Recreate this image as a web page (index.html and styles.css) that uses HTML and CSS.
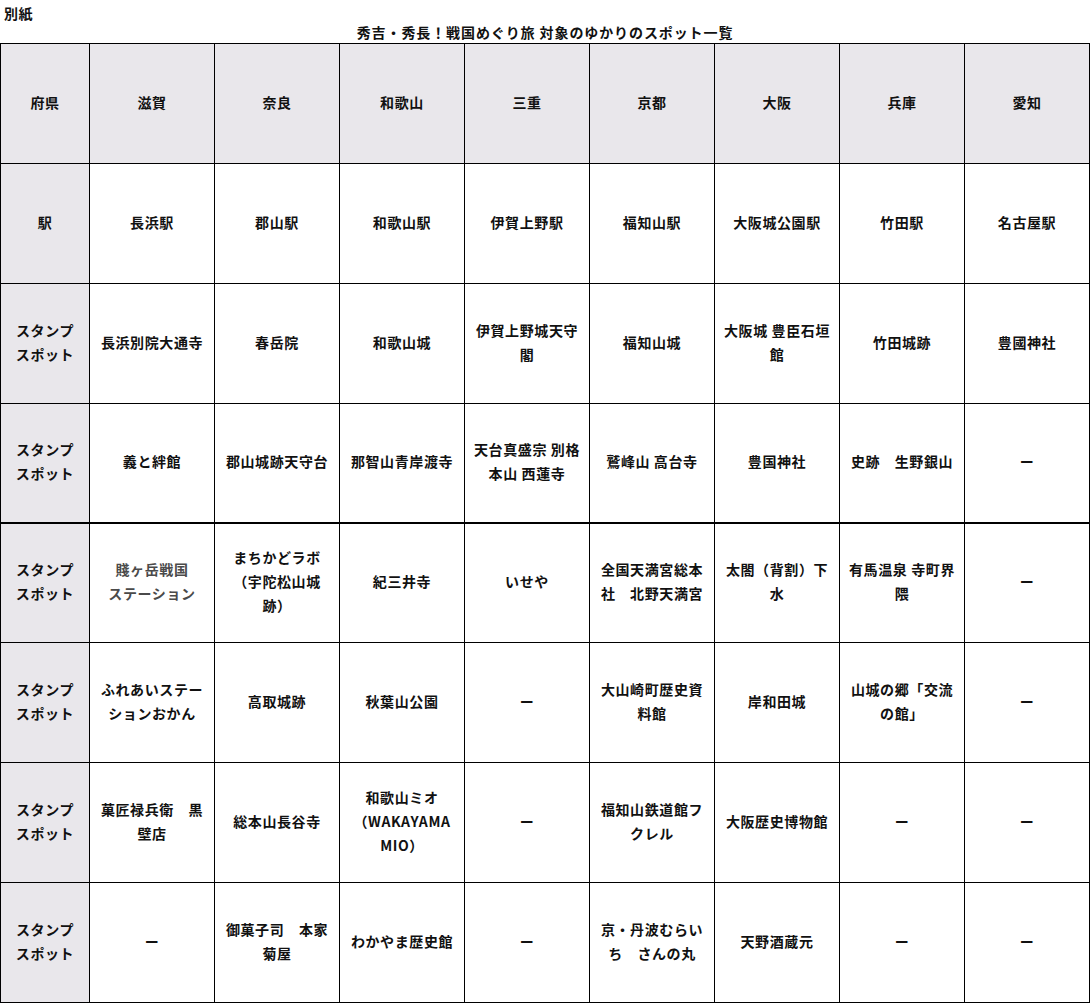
FILE: index.html
```html
<!DOCTYPE html>
<html lang="ja">
<head>
<meta charset="utf-8">
<title>秀吉・秀長！戦国めぐり旅 対象のゆかりのスポット一覧</title>
<link rel="stylesheet" href="styles.css">
</head>
<body>
<div class="annex">別紙</div>
<div class="title">秀吉・秀長！戦国めぐり旅 対象のゆかりのスポット一覧</div>
<table class="spots">
  <colgroup>
    <col class="c-head">
    <col class="c"><col class="c"><col class="c"><col class="c">
    <col class="c"><col class="c"><col class="c"><col class="c">
  </colgroup>
  <tr class="hdr">
    <th>府県</th><th>滋賀</th><th>奈良</th><th>和歌山</th><th>三重</th><th>京都</th><th>大阪</th><th>兵庫</th><th>愛知</th>
  </tr>
  <tr>
    <th>駅</th><td>長浜駅</td><td>郡山駅</td><td>和歌山駅</td><td>伊賀上野駅</td><td>福知山駅</td><td>大阪城公園駅</td><td>竹田駅</td><td>名古屋駅</td>
  </tr>
  <tr>
    <th>スタンプ<br>スポット</th><td>長浜別院大通寺</td><td>春岳院</td><td>和歌山城</td><td>伊賀上野城天守<br>閣</td><td>福知山城</td><td>大阪城 豊臣石垣<br>館</td><td>竹田城跡</td><td>豊國神社</td>
  </tr>
  <tr class="thick">
    <th>スタンプ<br>スポット</th><td>義と絆館</td><td>郡山城跡天守台</td><td>那智山青岸渡寺</td><td>天台真盛宗 別格<br>本山 西蓮寺</td><td>鷲峰山 高台寺</td><td>豊国神社</td><td>史跡　生野銀山</td><td class="dash">ー</td>
  </tr>
  <tr>
    <th>スタンプ<br>スポット</th><td class="light">賤ヶ岳戦国<br>ステーション</td><td>まちかどラボ<br>（宇陀松山城<br>跡）</td><td>紀三井寺</td><td>いせや</td><td>全国天満宮総本<br>社　北野天満宮</td><td>太閤（背割）下<br>水</td><td>有馬温泉 寺町界<br>隈</td><td class="dash">ー</td>
  </tr>
  <tr>
    <th>スタンプ<br>スポット</th><td>ふれあいステー<br>ションおかん</td><td>高取城跡</td><td>秋葉山公園</td><td class="dash">ー</td><td>大山崎町歴史資<br>料館</td><td>岸和田城</td><td>山城の郷「交流<br>の館」</td><td class="dash">ー</td>
  </tr>
  <tr>
    <th>スタンプ<br>スポット</th><td>菓匠禄兵衛　黒<br>壁店</td><td>総本山長谷寺</td><td>和歌山ミオ<br>（WAKAYAMA<br>MIO）</td><td class="dash">ー</td><td>福知山鉄道館フ<br>クレル</td><td>大阪歴史博物館</td><td class="dash">ー</td><td class="dash">ー</td>
  </tr>
  <tr>
    <th>スタンプ<br>スポット</th><td class="dash">ー</td><td>御菓子司　本家<br>菊屋</td><td>わかやま歴史館</td><td class="dash">ー</td><td>京・丹波むらい<br>ち　さんの丸</td><td>天野酒蔵元</td><td class="dash">ー</td><td class="dash">ー</td>
  </tr>
</table>
</body>
</html>
```

FILE: styles.css
```css
html, body {
  margin: 0;
  padding: 0;
  background: #ffffff;
}

body {
  font-family: "Noto Sans CJK JP", "Noto Sans", sans-serif;
  color: #111111;
  width: 1090px;
}

.annex {
  font-size: 14px;
  font-weight: 700;
  line-height: 20px;
  padding: 3px 0 0 4px;
  height: 19px;
  letter-spacing: 0.5px;
}

.title {
  font-size: 14px;
  font-weight: 700;
  line-height: 20px;
  height: 21px;
  text-align: center;
  letter-spacing: 0.9px;
}

.spots {
  border-collapse: collapse;
  table-layout: fixed;
  width: 1089px;
}

.c-head { width: 89px; }
.c { width: 125px; }

.spots th,
.spots td {
  border: 1px solid #000000;
  height: 120px;
  padding: 0 5px 4px;
  text-align: center;
  vertical-align: middle;
  font-size: 14px;
  font-weight: 700;
  line-height: 24px;
  letter-spacing: 0.6px;
  box-sizing: border-box;
}

.spots th {
  background: #e9e7eb;
}

.spots tr.thick th,
.spots tr.thick td {
  border-bottom-width: 2px;
  height: 119px;
}

.spots td.light {
  font-weight: 700;
  color: #4a4a4a;
}
```
